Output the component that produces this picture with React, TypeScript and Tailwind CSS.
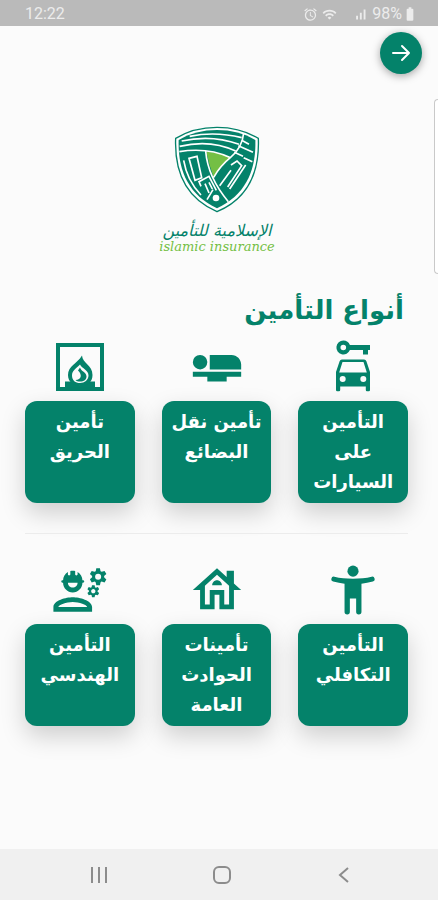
import React, { FC, ReactNode } from 'react'
import {
  MdAirlineSeatFlat,
  MdAlarm,
  MdBatteryFull,
  MdOutlineEngineering,
  MdOutlineHouse,
  MdSignalCellularAlt,
  MdWifi,
} from 'react-icons/md'

interface IInsurance {
  label: string
  icon: ReactNode
}

const rows: IInsurance[][] = [
  [
    { label: 'التأمين\nعلى\nالسيارات', icon: <CarIcon /> },
    { label: 'تأمين نقل\nالبضائع', icon: <MdAirlineSeatFlat size={58} /> },
    { label: 'تأمين\nالحريق', icon: <FireIcon /> },
  ],
  [
    { label: 'التأمين\nالتكافلي', icon: <PersonIcon /> },
    { label: 'تأمينات\nالحوادث\nالعامة', icon: <MdOutlineHouse size={58} /> },
    { label: 'التأمين\nالهندسي', icon: <MdOutlineEngineering size={58} /> },
  ],
]

export default function App() {
  return (
    <div
      dir="rtl"
      className="relative flex min-h-screen flex-col bg-[#fbfbfb] font-['DejaVu_Sans',sans-serif]"
    >
      <StatusBar />
      <header className="flex px-4 pt-1.5">
        <button
          aria-label="رجوع"
          className="flex h-[42px] w-[42px] items-center justify-center rounded-full bg-[#04826a] shadow-[0_2px_8px_rgba(0,0,0,0.35)]"
        >
          <svg viewBox="0 0 24 24" className="h-6 w-6" fill="none" stroke="#fff" strokeWidth="2">
            <path d="M4 12H20M13 5l7 7-7 7" strokeLinecap="round" strokeLinejoin="round" />
          </svg>
        </button>
      </header>
      <main className="flex grow flex-col">
        <Logo />
        <h1 className="mt-[37px] pr-[34px] text-[26px] leading-[40px] font-bold text-[#04826a]">
          أنواع التأمين
        </h1>
        <div className="flex flex-col pt-2 pr-[30px] pl-[25px]">
          <InsuranceRow items={rows[0]} />
          <hr className="mt-[30px] mb-[27px] border-[#ececec]" />
          <InsuranceRow items={rows[1]} />
        </div>
      </main>
      <NavBar />
      <div className="absolute top-[99px] left-[434px] h-[175px] w-1 rounded-l-md border border-r-0 border-[#c9c9c9] bg-white" />
    </div>
  )
}

const StatusBar: FC = () => (
  <div
    dir="ltr"
    className="flex h-[26px] items-center justify-between bg-[#bababa] pt-0.5 pr-5 pl-[25px] font-[Roboto,sans-serif] text-base text-[#ececec]"
  >
    <span>12:22</span>
    <div className="flex items-center">
      <MdAlarm size={15} className="mr-1" stroke="currentColor" />
      <MdWifi size={15} className="mr-4" />
      <MdSignalCellularAlt size={15} className="mr-1" />
      <span>98%</span>
      <MdBatteryFull size={16} />
    </div>
  </div>
)

const InsuranceRow: FC<{ items: IInsurance[] }> = ({ items }) => (
  <div className="grid grid-cols-3 gap-[27px]">
    {items.map((item) => (
      <div key={item.label} className="flex flex-col items-center gap-[5px] text-[#04826a]">
        {item.icon}
        <button className="flex h-[102px] w-full justify-center rounded-xl bg-[#04826a] pt-1.5 text-center text-lg leading-[30px] font-bold whitespace-pre text-white shadow-[0_10px_24px_rgba(0,0,0,0.18)]">
          {item.label}
        </button>
      </div>
    ))}
  </div>
)

function CarIcon() {
  return (
    <svg viewBox="0 0 58 58" width="58" height="58" fill="currentColor">
      <path
        fillRule="evenodd"
        d="M19.300 2.500a7 7 0 0 1 6.600 4.600H46v5h-2v4.400h-5v-4.400H25.900a7 7 0 1 1-6.600-9.600zM19.300 6.700a2.800 2.800 0 1 0 0 5.600 2.800 2.800 0 0 0 0-5.600z"
      />
      <path
        fillRule="evenodd"
        d="M18 21.500h22a2.500 2.500 0 0 1 2.400 1.700L46 34v18a1.200 1.200 0 0 1-1.200 1.200H43a1.200 1.200 0 0 1-1.200-1.200v-3.500H16.200V52a1.200 1.200 0 0 1-1.200 1.200h-1.800A1.200 1.200 0 0 1 12 52V34l3.600-10.800A2.500 2.500 0 0 1 18 21.500zM18.500 24l-3.300 10.500h27.600L39.500 24zM18.700 38a3 3 0 1 0 0 6 3 3 0 0 0 0-6zM39.300 38a3 3 0 1 0 0 6 3 3 0 0 0 0-6z"
      />
    </svg>
  )
}

function FireIcon() {
  return (
    <svg viewBox="0 0 58 58" width="58" height="58" fill="currentColor">
      <path fillRule="evenodd" d="M5 5h48v48H5zM9 9v40h5v-5.500h6l9 4 9-4h6V49h5V9z" />
      <path d="M31 17.500c.500 8 10.500 9.500 10.500 19.500 0 7-5 11-12 11s-12.500-4-12.500-11c0-9 9-11 14-19.500z" />
      <path
        d="M29 26.500c-4 4-8 6-8 11 0 5 3.500 7.500 8 7.500s8.500-3 8.500-7.500C37.500 32 31 30.500 29 26.500z"
        fill="#fbfbfb"
      />
      <path d="M29 29.500c1 4 6.500 4.500 6.500 9 0 3-2.500 5-6.500 5-2 0-3.500-.500-4.500-1.500 6 0 7-5.500 2.500-9.500z" />
    </svg>
  )
}

function PersonIcon() {
  return (
    <svg viewBox="0 0 24 24" width="58" height="58" fill="currentColor">
      <circle cx="12" cy="4.200" r="2.300" />
      <path d="M19.700 6.500C17.400 7.200 14.800 7.300 12 7.300S6.600 7.200 4.300 6.500a1 1 0 0 0-.500 1.950C5.300 8.850 7 9.200 8.500 9.400V21a1.100 1.100 0 0 0 2.200 0v-5.500h2.600V21a1.100 1.100 0 0 0 2.200 0V9.400c1.500-.200 3.200-.550 4.700-.950a1 1 0 0 0-.500-1.950z" />
    </svg>
  )
}

const Logo: FC = () => (
  <div className="mt-[51px] flex flex-col items-center pr-1">
    <svg viewBox="75 30 258 264" className="h-[88px] w-[86px]">
      <path
        d="M204 37C158 37 116 48 80 70c-4 98 30 180 124 220 94-40 128-122 124-220-36-22-78-33-124-33z"
        fill="#fff"
        stroke="#04826a"
        strokeWidth="4"
      />
      <path
        d="M204 45C162 45 122 55 89 75c-3 92 30 165 115 205 85-40 118-113 115-205-33-20-73-30-115-30z"
        fill="#04826a"
      />
      <path d="M172 110q38 0 72 18-32 25-50 59-14-38-22-77z" fill="#74bf44" />
      <g fill="none" stroke="#fff" strokeWidth="5">
        <path d="M91 110q84-14 154 18M284 54q-4 44-40 74-30 24-50 59M170 108q6 78 68 152" />
        <path d="M92 94q92-22 168 14M98 78q90-20 172 10M122 64q76-16 156 4" />
        <path d="M278 76l22 12M268 92l44 20M256 112l26 12" />
        <path d="M246 150l18-12 14 14-42 64M290 150l-48 72M246 166l-34 46M284 128l26 12" />
        <path d="M120 130l24-6 14 64-20 8zM156 214l-6-14 30-16 22 42M168 206l12 28M180 202l10 20" />
        <path d="M104 136q10 60 52 104M174 254l18-30" />
      </g>
      <circle cx="201" cy="249" r="10" fill="#fff" />
    </svg>
    <p className="mt-2 text-base leading-5 text-[#04826a] italic">الإسلامية للتأمين</p>
    <p
      dir="ltr"
      className="font-['DejaVu_Serif',serif] text-[13px] leading-3 text-[#74bf44] italic"
    >
      islamic insurance
    </p>
  </div>
)

const NavBar: FC = () => (
  <nav
    dir="ltr"
    className="flex h-[51px] items-center justify-between bg-[#f0f0f0] pr-[82px] pl-[87px] text-[#8c8c8c]"
  >
    <button aria-label="التطبيقات الأخيرة">
      <svg viewBox="0 0 24 24" className="h-6 w-6" stroke="currentColor" strokeWidth="2">
        <path d="M5 4v16M12 4v16M19 4v16" />
      </svg>
    </button>
    <button aria-label="الرئيسية">
      <svg viewBox="0 0 24 24" className="h-6 w-6" fill="none" stroke="currentColor" strokeWidth="2">
        <rect x="4" y="4" width="16" height="16" rx="5" />
      </svg>
    </button>
    <button aria-label="السابق">
      <svg viewBox="0 0 24 24" className="h-6 w-6" fill="none" stroke="currentColor" strokeWidth="2">
        <path d="M16 5l-8 7 8 7" />
      </svg>
    </button>
  </nav>
)
